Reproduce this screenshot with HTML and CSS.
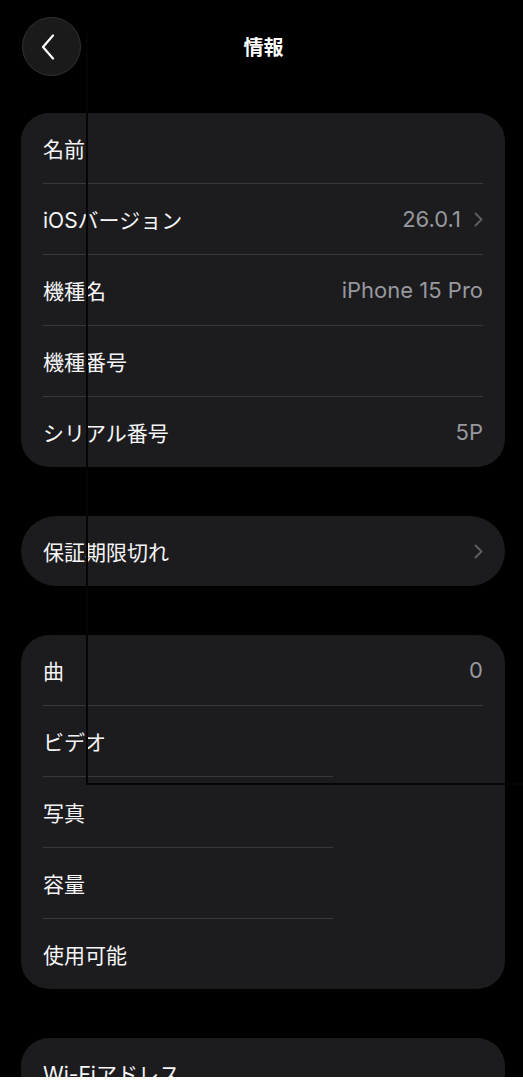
FILE: index.html
```html
<!DOCTYPE html>
<html lang="ja">
<head>
	<meta charset="UTF-8">
	<title>情報</title>
	<meta name="viewport" content="width=device-width, initial-scale=1.0">
	<link rel="stylesheet" href="styles.css">
</head>
<body>
	<div class="screen">
		<header class="nav">
			<button class="back" aria-label="戻る">
				<svg width="14" height="26" viewBox="0 0 14 26"><path d="M12 1.5 L2 13 L12 24.5" fill="none" stroke="#fff" stroke-width="2.2" stroke-linecap="round" stroke-linejoin="round"/></svg>
			</button>
			<h1 class="title">情報</h1>
			<span></span>
		</header>

		<main class="groups">
			<section class="card">
				<div class="row"><span class="label">名前</span></div>
				<div class="sep"></div>
				<div class="row">
					<span class="label">iOSバージョン</span>
					<span class="value">26.0.1<svg class="chev" width="9" height="15" viewBox="0 0 9 15"><path d="M1.5 1.5 L7.5 7.5 L1.5 13.5" fill="none" stroke="#5c5c61" stroke-width="2" stroke-linecap="round" stroke-linejoin="round"/></svg></span>
				</div>
				<div class="sep"></div>
				<div class="row"><span class="label">機種名</span><span class="value">iPhone 15 Pro</span></div>
				<div class="sep"></div>
				<div class="row"><span class="label">機種番号</span></div>
				<div class="sep"></div>
				<div class="row"><span class="label">シリアル番号</span><span class="value">5P</span></div>
			</section>

			<section class="card pill">
				<div class="row">
					<span class="label">保証期限切れ</span>
					<span class="value"><svg class="chev" width="9" height="15" viewBox="0 0 9 15"><path d="M1.5 1.5 L7.5 7.5 L1.5 13.5" fill="none" stroke="#5c5c61" stroke-width="2" stroke-linecap="round" stroke-linejoin="round"/></svg></span>
				</div>
			</section>

			<section class="card">
				<div class="row"><span class="label">曲</span><span class="value">0</span></div>
				<div class="sep"></div>
				<div class="row"><span class="label">ビデオ</span></div>
				<div class="sep short"></div>
				<div class="row"><span class="label">写真</span></div>
				<div class="sep short"></div>
				<div class="row"><span class="label">容量</span></div>
				<div class="sep short"></div>
				<div class="row"><span class="label">使用可能</span></div>
			</section>

			<section class="card">
				<div class="row"><span class="label">Wi-Fiアドレス</span></div>
			</section>
		</main>

		<div class="glitch"></div>
	</div>
</body>
</html>
```

FILE: styles.css
```css
*{
	margin:0;
	padding:0;
	box-sizing:border-box;
}
html,body{
	width:100%;
	height:100%;
	overflow:hidden;
	background:#fff;
}
body{
	font-family:Inter, "Noto Sans CJK JP", sans-serif;
	color:#f5f5f7;
}
.screen{
	position:relative;
	width:100%;
	height:1077px;
	overflow:hidden;
	background:#000;
}
.nav{
	display:grid;
	grid-template-columns:59px 1fr 59px;
	align-items:center;
	padding:17px 18px 0 22px;
}
.back{
	width:59px;
	height:59px;
	border-radius:50%;
	background:#1a1a1b;
	border:1px solid #323234;
	display:flex;
	align-items:center;
	justify-content:center;
	padding-right:8px;
}
.title{
	text-align:center;
	font-size:20px;
	font-weight:700;
	color:#fff;
}
.groups{
	display:flex;
	flex-direction:column;
	gap:49px;
	margin-top:37px;
}
.card{
	margin:0 18px 0 21px;
	background:#1c1c1e;
	border-radius:28px;
	overflow:hidden;
}
.card.pill{
	border-radius:35px;
}
.row{
	height:70px;
	display:flex;
	align-items:center;
	justify-content:space-between;
	padding:0 22px;
}
.label{
	font-size:21px;
}
.value{
	display:flex;
	align-items:center;
	gap:13px;
	font-size:22px;
	color:#98989f;
}
.sep{
	height:1px;
	margin:0 22px;
	background:#38383a;
}
.sep.short{
	width:290px;
}
.glitch{
	position:absolute;
	left:86px;
	top:33px;
	width:437px;
	height:752px;
	border-left:2px solid #050506;
	border-bottom:2px solid #050506;
	pointer-events:none;
}
```
